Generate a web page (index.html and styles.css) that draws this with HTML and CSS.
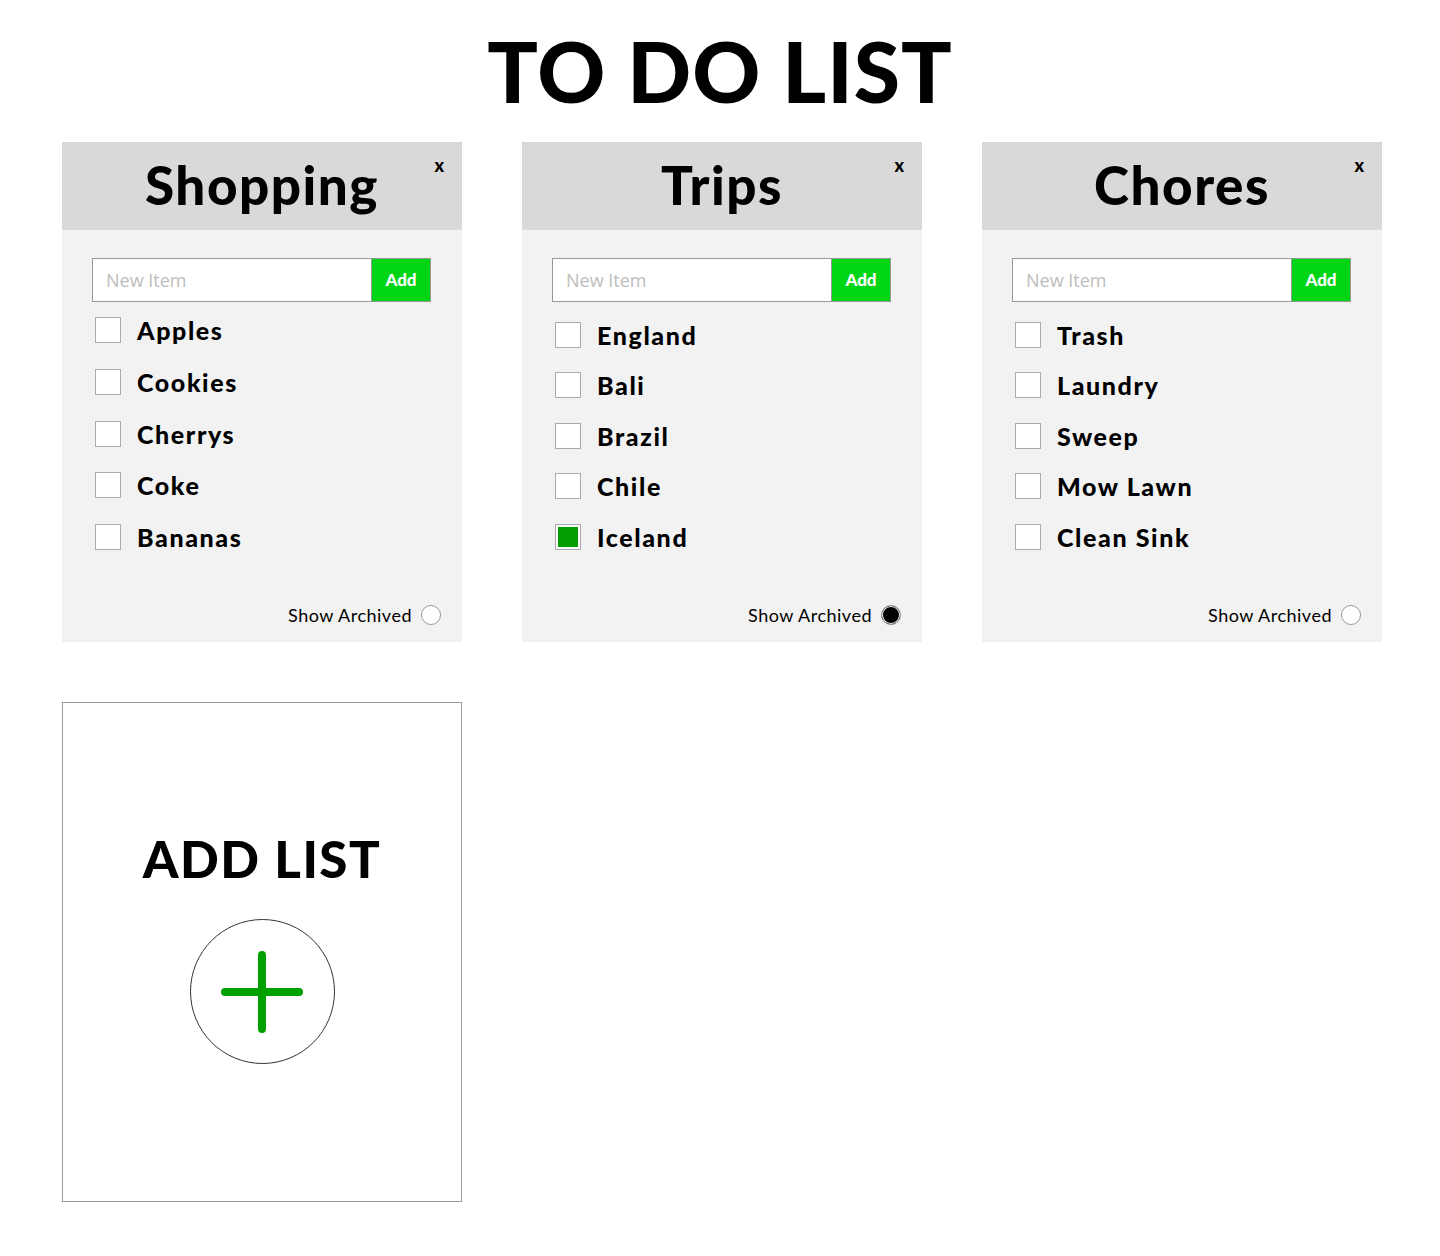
FILE: index.html
```html
<!DOCTYPE html>
<html>
<head>
<meta charset="utf-8">
<link rel="stylesheet" href="styles.css">
</head>
<body>
<h1 class="page-title">TO DO LIST</h1>
<div class="board">
  <section class="card">
    <header class="card-head"><h2 class="card-title">Shopping</h2><span class="close">x</span></header>
    <div class="card-body">
      <div class="new-item"><input class="new-input" placeholder="New Item"><button class="add-btn">Add</button></div>
      <ul class="items tight">
        <li class="item"><span class="box"></span><span class="label">Apples</span></li>
        <li class="item"><span class="box"></span><span class="label">Cookies</span></li>
        <li class="item"><span class="box"></span><span class="label">Cherrys</span></li>
        <li class="item"><span class="box"></span><span class="label">Coke</span></li>
        <li class="item"><span class="box"></span><span class="label">Bananas</span></li>
      </ul>
      <div class="archived"><span>Show Archived</span><span class="radio"></span></div>
    </div>
  </section>
  <section class="card">
    <header class="card-head"><h2 class="card-title">Trips</h2><span class="close">x</span></header>
    <div class="card-body">
      <div class="new-item"><input class="new-input" placeholder="New Item"><button class="add-btn">Add</button></div>
      <ul class="items">
        <li class="item"><span class="box"></span><span class="label">England</span></li>
        <li class="item"><span class="box"></span><span class="label">Bali</span></li>
        <li class="item"><span class="box"></span><span class="label">Brazil</span></li>
        <li class="item"><span class="box"></span><span class="label">Chile</span></li>
        <li class="item"><span class="box checked"></span><span class="label">Iceland</span></li>
      </ul>
      <div class="archived"><span>Show Archived</span><span class="radio on"></span></div>
    </div>
  </section>
  <section class="card">
    <header class="card-head"><h2 class="card-title">Chores</h2><span class="close">x</span></header>
    <div class="card-body">
      <div class="new-item"><input class="new-input" placeholder="New Item"><button class="add-btn">Add</button></div>
      <ul class="items">
        <li class="item"><span class="box"></span><span class="label">Trash</span></li>
        <li class="item"><span class="box"></span><span class="label">Laundry</span></li>
        <li class="item"><span class="box"></span><span class="label">Sweep</span></li>
        <li class="item"><span class="box"></span><span class="label">Mow Lawn</span></li>
        <li class="item"><span class="box"></span><span class="label">Clean Sink</span></li>
      </ul>
      <div class="archived"><span>Show Archived</span><span class="radio"></span></div>
    </div>
  </section>
  <section class="add-card">
    <h2 class="add-title">ADD LIST</h2>
    <div class="plus-circle">
      <svg width="82" height="82" viewBox="0 0 82 82"><path d="M41 4 V78 M4 41 H78" stroke="#00a000" stroke-width="8" stroke-linecap="round" fill="none"/></svg>
    </div>
  </section>
</div>
</body>
</html>
```
FILE: styles.css
```css
* { box-sizing: border-box; }
body {
  margin: 0;
  background: #fff;
  font-family: Lato, "Noto Sans", sans-serif;
  color: #000;
}
.page-title {
  margin: 0;
  padding-top: 23px;
  height: 142px;
  text-align: center;
  font-size: 84px;
  font-weight: 900;
  line-height: 96px;
  letter-spacing: 1px;
}
.board {
  display: grid;
  grid-template-columns: repeat(3, 400px);
  column-gap: 60px;
  row-gap: 60px;
  padding-left: 62px;
}
.card {
  height: 500px;
  background: #f2f2f2;
  display: flex;
  flex-direction: column;
}
.card-head {
  height: 88px;
  background: #d9d9d9;
  position: relative;
  display: flex;
  align-items: center;
  justify-content: center;
}
.card-title {
  margin: 0;
  font-size: 53px;
  font-weight: 900;
  line-height: 88px;
  letter-spacing: 1.5px;
  padding-bottom: 2px;
}
.close {
  position: absolute;
  right: 18px;
  top: 12px;
  font-size: 18px;
  font-weight: 900;
}
.card-body {
  flex: 1;
  display: flex;
  flex-direction: column;
  padding: 28px 21px 16px 30px;
}
.new-item {
  display: flex;
  height: 44px;
  width: 339px;
  border: 1px solid #999;
  background: #fff;
}
.new-input {
  flex: 1;
  min-width: 0;
  border: 0;
  border-right: 1px solid #999;
  padding: 0 0 0 13px;
  font-family: "Open Sans", Lato, sans-serif;
  font-size: 18px;
  background: #fff;
  outline: none;
}
.new-input::placeholder { color: #bdbdbd; }
.add-btn {
  width: 58px;
  border: 0;
  background: #00d515;
  color: #fff;
  font-family: Lato, sans-serif;
  font-weight: 900;
  font-size: 17px;
  padding: 0 0 2px;
}
.items {
  list-style: none;
  margin: 0;
  padding: 20px 0 0 3px;
  display: flex;
  flex-direction: column;
  gap: 24.4px;
}
.items.tight { padding-top: 15px; gap: 25.8px; }
.item {
  display: flex;
  align-items: center;
  gap: 16px;
  height: 26px;
}
.box {
  width: 26px;
  height: 26px;
  border: 1px solid #aaa;
  background: #fff;
  flex: none;
}
.box.checked {
  background: #009e00;
  box-shadow: inset 0 0 0 2px #fff;
}
.label {
  font-size: 25px;
  font-weight: 900;
  letter-spacing: 1.6px;
}
.archived {
  margin-top: auto;
  display: flex;
  align-items: center;
  justify-content: flex-end;
  gap: 9px;
  font-size: 18px;
  letter-spacing: 0.5px;
}
.radio {
  width: 20px;
  height: 20px;
  border-radius: 50%;
  border: 1px solid #999;
  background: #fff;
}
.radio.on {
  background: #000;
  box-shadow: inset 0 0 0 1px #fff;
}
.add-card {
  height: 500px;
  border: 1px solid #999;
  background: #fff;
  display: flex;
  flex-direction: column;
  align-items: center;
  padding-top: 116px;
}
.add-title {
  margin: 0;
  font-size: 51px;
  font-weight: 900;
  line-height: 80px;
  letter-spacing: 1.5px;
}
.plus-circle {
  margin-top: 20px;
  width: 145px;
  height: 145px;
  border: 1px solid #333;
  border-radius: 50%;
  display: flex;
  align-items: center;
  justify-content: center;
}
```
